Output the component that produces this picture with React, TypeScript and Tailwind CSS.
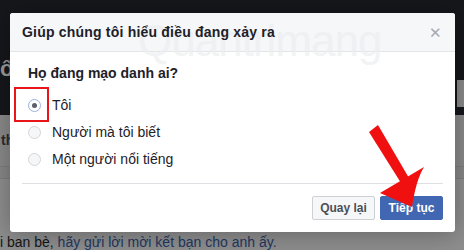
const options = [
  { label: "Tôi", checked: true },
  { label: "Người mà tôi biết", checked: false },
  { label: "Một người nổi tiếng", checked: false },
];

function Radio({ checked }: { checked: boolean }) {
  return (
    <span
      className={
        checked
          ? "flex h-[13px] w-[13px] items-center justify-center rounded-full border border-[#9bb2e0] bg-white"
          : "flex h-[13px] w-[13px] items-center justify-center rounded-full border border-[#d3d5d9] bg-[#f5f6f7]"
      }
    >
      {checked && <span className="h-[5px] w-[5px] rounded-full bg-[#5a5f69]" />}
    </span>
  );
}

function Arrow() {
  return (
    <svg className="pointer-events-none absolute left-0 top-0" width="464" height="250" viewBox="0 0 464 250">
      <path d="M369 132 L378 125 L409 178 L401 183 Z" fill="#f01010" />
      <path d="M380 193 L424 167 Q416 180 412 207 Z" fill="#f01010" />
    </svg>
  );
}

export default function App() {
  return (
    <div className="relative h-[250px] w-[464px] overflow-hidden bg-[#8e8e8e] font-['Liberation_Sans',Arial,sans-serif]">
      {/* dimmed page behind */}
      <div className="flex h-[115px] flex-col bg-[#15171b]">
        <div className="flex h-[80px] items-end">
          <span className="text-[22px] font-bold leading-none text-[#9a9a9a]">ố</span>
        </div>
        <div className="ml-auto h-[27px] w-[7px] bg-[#8a8a8a]" />
      </div>
      <div className="flex h-[52px] items-center border-b border-[#7e7e7e] bg-[#8a8a8a]">
        <span className="pl-[1px] text-[14px] font-bold text-[#2a2a2a]">th</span>
      </div>
      <div className="h-[12px] border-b border-[#7e7e7e] bg-[#878787]" />
      <div className="flex h-[70px] items-end pb-0 text-[14px] leading-[14px] text-[#151515]">
        <span>i ban bè,&nbsp;</span>
        <span className="text-[#223762]">hãy gửi lời mời kết bạn cho anh ấy.</span>
      </div>

      {/* modal */}
      <div className="absolute left-[10px] top-[13px] flex h-[219px] w-[445px] flex-col overflow-hidden rounded-[3px] bg-white shadow-[0_2px_26px_rgba(0,0,0,0.3)]">
        <div className="flex h-[39px] items-center justify-between border-b border-[#e5e5e5] bg-[#f6f7f9] px-3">
          <span className="relative z-10 text-[14px] font-bold tracking-[0.2px] text-[#1d2129]">
            Giúp chúng tôi hiểu điều đang xảy ra
          </span>
          <span className="mr-[1px] text-[15px] leading-none text-[#a5a8ae]">✕</span>
        </div>
        <span className="pointer-events-none absolute left-[128px] top-[6px] text-[44px] leading-none tracking-[-1px] text-[#eceef1] opacity-70">
          Quantrimang
        </span>
        <div className="relative flex flex-1 flex-col px-3">
          <div className="pl-[6px] pt-[12px] text-[14px] font-bold leading-[18px] text-[#1d2129]">
            Họ đang mạo danh ai?
          </div>
          <div className="mt-[10px] flex flex-col pl-[6px]">
            {options.map((o) => (
              <div key={o.label} className="flex h-[27px] items-center gap-[11px] text-[14px] text-[#1d2129]">
                <Radio checked={o.checked} />
                <span>{o.label}</span>
              </div>
            ))}
          </div>
          <div className="mt-auto flex items-center justify-end gap-[5px] border-t border-[#dddfe2] pb-[12px] pt-[12px]">
            <button
              type="button"
              className="h-[24px] w-[63px] rounded-[2px] border border-[#ced0d4] bg-[#f6f7f9] text-[12px] font-bold text-[#4b4f56]"
            >
              Quay lại
            </button>
            <button
              type="button"
              className="h-[24px] w-[63px] rounded-[2px] border border-[#4267b2] bg-[#4267b2] text-[12px] font-bold text-white"
            >
              Tiếp tục
            </button>
          </div>
        </div>
      </div>

      {/* red highlight box */}
      <div className="absolute left-[14px] top-[87px] h-[35px] w-[35px] border-2 border-[#e8161b]" />
      <Arrow />
    </div>
  );
}
